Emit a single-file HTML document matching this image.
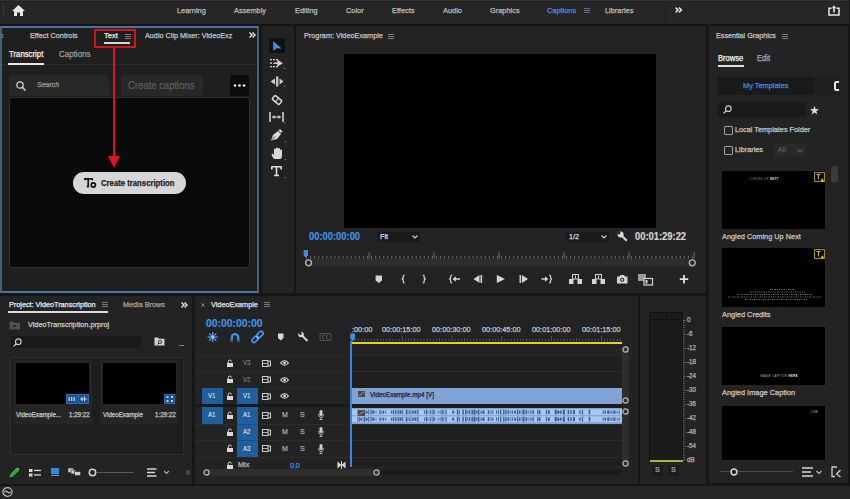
<!DOCTYPE html>
<html><head><meta charset="utf-8">
<style>
*{margin:0;padding:0;box-sizing:border-box}
html,body{width:850px;height:499px;overflow:hidden;background:#161616;font-family:"Liberation Sans",sans-serif}
.a{position:absolute}
.p{position:absolute;background:#232323}
.t{position:absolute;font-size:7.4px;line-height:10px;white-space:nowrap;color:#c4c4c4;-webkit-text-stroke:0.25px currentColor}
.blk{position:absolute;background:#000}
svg{position:absolute;overflow:visible}
.hb{position:absolute;width:5.5px;height:5px;border-top:1px solid #7a7a7a;border-bottom:1px solid #7a7a7a}
.hb:after{content:"";position:absolute;left:0;right:0;top:1px;height:1px;background:#7a7a7a}
</style></head><body>

<!-- TOP BAR -->
<div class="p" style="left:0;top:0;width:850px;height:24px;background:#262626"></div>
<div class="a" style="left:0;top:0;width:850px;height:1px;background:#323232"></div>
<div class="a" style="left:0;top:1px;width:850px;height:1px;background:#222"></div>
<div class="a" style="left:3px;top:3px;width:1px;height:13px;background:#3a3a3a"></div>
<svg style="left:12px;top:5px" width="13" height="11" viewBox="0 0 13 11"><path d="M6.5 0 L13 6 L11 6 L11 11 L8 11 L8 7.5 L5 7.5 L5 11 L2 11 L2 6 L0 6 Z" fill="#e6e6e6"/></svg>
<div class="t" style="transform:scaleX(0.926);transform-origin:0 50%;font-size:7.99px;left:177px;top:6px;color:#bdbdbd">Learning</div>
<div class="t" style="transform:scaleX(0.926);transform-origin:0 50%;font-size:7.99px;left:234px;top:6px;color:#bdbdbd">Assembly</div>
<div class="t" style="transform:scaleX(0.926);transform-origin:0 50%;font-size:7.99px;left:295px;top:6px;color:#bdbdbd">Editing</div>
<div class="t" style="transform:scaleX(0.926);transform-origin:0 50%;font-size:7.99px;left:346px;top:6px;color:#bdbdbd">Color</div>
<div class="t" style="transform:scaleX(0.926);transform-origin:0 50%;font-size:7.99px;left:392px;top:6px;color:#bdbdbd">Effects</div>
<div class="t" style="transform:scaleX(0.926);transform-origin:0 50%;font-size:7.99px;left:443px;top:6px;color:#bdbdbd">Audio</div>
<div class="t" style="transform:scaleX(0.926);transform-origin:0 50%;font-size:7.99px;left:490px;top:6px;color:#bdbdbd">Graphics</div>
<div class="t" style="transform:scaleX(0.926);transform-origin:0 50%;font-size:7.99px;left:547px;top:6px;color:#4d8fd6">Captions</div>
<div class="hb" style="left:584px;top:8px;border-color:#3f75b8"></div>
<div class="t" style="transform:scaleX(0.926);transform-origin:0 50%;font-size:7.99px;left:605px;top:6px;color:#bdbdbd">Libraries</div>
<div class="a" style="left:664.5px;top:2px;width:1px;height:22px;background:#202020"></div>
<svg style="left:675px;top:7px" width="7.5" height="6" viewBox="0 0 7.5 6"><path d="M0.6 0.6 L3 3 L0.6 5.4 M4 0.6 L6.4 3 L4 5.4" stroke="#e8e8e8" stroke-width="1.5" fill="none"/></svg>

<svg style="left:828px;top:4.5px" width="12" height="11" viewBox="0 0 12 11"><path d="M3.5 3.2 H1 V10 H11 V3.2 H8.5" stroke="#e6e6e6" stroke-width="1.5" fill="none"/><path d="M6 7.5 V1.5" stroke="#e6e6e6" stroke-width="1.6"/><path d="M3.8 3.2 L6 0.3 L8.2 3.2 Z" fill="#e6e6e6"/></svg>
<div class="a" style="left:848.5px;top:0;width:1.5px;height:499px;background:#141414"></div>


<!-- LEFT TEXT PANEL -->
<div class="p" style="left:0;top:26px;width:259px;height:267px;border:2px solid #4c73a2;border-left-color:#40607f;border-right-color:#40607f;background:#1f1f1f"></div>
<div class="t" style="transform:scaleX(0.926);transform-origin:0 50%;font-size:7.99px;left:0px;top:31px;color:#777">s</div>
<div class="t" style="transform:scaleX(0.926);transform-origin:0 50%;left:30px;top:31px;font-size:7.88px">Effect Controls</div>
<div class="t" style="transform:scaleX(0.926);transform-origin:0 50%;left:104px;top:31px;font-size:8.1px;color:#f0f0f0">Text</div>
<div class="hb" style="left:125px;top:34px"></div>
<div class="a" style="left:104px;top:42px;width:26px;height:2px;background:#d8d8d8"></div>
<div class="a" style="left:94px;top:29px;width:42px;height:19px;border:2px solid #d4141c"></div>
<div class="t" style="transform:scaleX(0.926);transform-origin:0 50%;left:145px;top:31px;font-size:7.83px">Audio Clip Mixer: VideoExz</div>
<svg style="left:249px;top:32px" width="7" height="6" viewBox="0 0 7 6"><path d="M0.5 0.5 L3 3 L0.5 5.5 M3.5 0.5 L6 3 L3.5 5.5" stroke="#e8e8e8" stroke-width="1.4" fill="none"/></svg>
<div class="t" style="transform:scaleX(0.926);transform-origin:0 50%;left:9px;top:48.5px;font-size:8.42px;color:#f0f0f0">Transcript</div>
<div class="t" style="transform:scaleX(0.926);transform-origin:0 50%;left:59px;top:48.5px;font-size:8.64px;color:#9c9c9c">Captions</div>
<div class="a" style="left:2px;top:64px;width:255px;height:1px;background:#2c2c2c"></div>
<div class="a" style="left:8px;top:63px;width:36px;height:2px;background:#e8e8e8"></div>
<div class="a" style="left:9px;top:75px;width:100px;height:21px;background:#282828;border-radius:2px"></div>
<svg style="left:16px;top:81px" width="11" height="10" viewBox="0 0 11 10"><circle cx="4" cy="4" r="3.2" stroke="#cfcfcf" stroke-width="1.3" fill="none"/><path d="M6.3 6.3 L9.5 9.5" stroke="#cfcfcf" stroke-width="1.5"/></svg>
<div class="t" style="transform:scaleX(0.926);transform-origin:0 50%;left:37px;top:80px;font-size:7.56px;font-style:italic;color:#9a9a9a">Search</div>
<div class="a" style="left:121px;top:75px;width:82px;height:21px;background:#282828;border-radius:2px"></div>
<div class="t" style="transform:scaleX(0.926);transform-origin:0 50%;left:128px;top:80.5px;font-size:10.26px;color:#5c5c5c">Create captions</div>
<div class="a" style="left:230px;top:75px;width:19px;height:21px;background:#0b0b0b;border-radius:2px"></div>
<svg style="left:233px;top:84px" width="13" height="3" viewBox="0 0 13 3"><circle cx="2" cy="1.5" r="1.3" fill="#f0f0f0"/><circle cx="6.5" cy="1.5" r="1.3" fill="#f0f0f0"/><circle cx="11" cy="1.5" r="1.3" fill="#f0f0f0"/></svg>
<div class="a" style="left:9px;top:97px;width:241px;height:171px;background:#0a0a0a;border:1.3px solid #2e2e2e;border-radius:3px"></div>
<div class="a" style="left:113px;top:48px;width:2px;height:110px;background:#e0141c"></div>
<svg style="left:108px;top:156px" width="12" height="12" viewBox="0 0 12 12"><path d="M0 0 L12 0 L6 12 Z" fill="#e0141c"/></svg>
<div class="a" style="left:73px;top:172px;width:113px;height:22px;background:#d6d6d6;border-radius:11px"></div>
<svg style="left:84px;top:177px" width="13" height="12" viewBox="0 0 13 12"><path d="M0.9 3.3 V1.8 H8.2 V3.3 M4.2 1.8 V9.6 H2.8" stroke="#111" stroke-width="1.7" fill="none"/><circle cx="9.3" cy="8" r="2.1" stroke="#111" stroke-width="1.7" fill="none"/></svg>
<div class="t" style="left:101px;top:178px;font-size:9.4px;font-weight:bold;color:#1e1e1e;transform:scaleX(0.825);transform-origin:0 0">Create transcription</div>

<!-- TOOLS -->
<div class="p" style="left:262px;top:26px;width:32px;height:267px"></div>
<div class="a" style="left:269px;top:38px;width:16px;height:15px;background:#111"></div>
<svg style="left:273px;top:41px" width="10" height="11" viewBox="0 0 10 11"><path d="M0 0 L0.5 10 L3.6 7.3 L8.6 7.6 Z" fill="#3b8ff0"/></svg>
<svg style="left:270px;top:58px" width="15" height="14" viewBox="0 0 15 14"><g fill="#d0d0d0"><rect x="0" y="1" width="2" height="1.3"/><rect x="3" y="1" width="2" height="1.3"/><rect x="6" y="1" width="2" height="1.3"/><rect x="0" y="4.5" width="2" height="1.3"/><rect x="0" y="8" width="2" height="1.3"/><rect x="3" y="8" width="2" height="1.3"/><rect x="6" y="8" width="2" height="1.3"/></g><path d="M3.5 5.2 H10 M8 3 L11.5 5.2 L8 7.4 Z" stroke="#d0d0d0" stroke-width="1.5" fill="#d0d0d0"/><path d="M13.5 11 L15 11 L15 9.5 Z" fill="#8a8a8a"/></svg>
<svg style="left:270px;top:76px" width="15" height="14" viewBox="0 0 15 14"><path d="M6.6 0.5 V10.5 M7.8 0.5 V10.5" stroke="#d0d0d0" stroke-width="1.1"/><path d="M0.5 5.5 L5 2.5 L5 8.5 Z M13.5 5.5 L9.5 2.5 L9.5 8.5 Z" fill="#d0d0d0"/><path d="M13.5 11 L15 11 L15 9.5 Z" fill="#8a8a8a"/></svg>
<svg style="left:271px;top:94px" width="13" height="12" viewBox="0 0 13 12"><g transform="rotate(40 6 6)"><rect x="1.5" y="3.5" width="9" height="5" rx="1" stroke="#d8d8d8" stroke-width="1.5" fill="none"/><path d="M6 3.5 V8.5" stroke="#d8d8d8" stroke-width="1"/></g></svg>
<svg style="left:269px;top:111px" width="16" height="14" viewBox="0 0 16 14"><path d="M1 1 V11 M14 1 V11" stroke="#d0d0d0" stroke-width="1.6"/><path d="M3.5 6 H11.5" stroke="#d0d0d0" stroke-width="1.2"/><path d="M3 6 L5.5 4 V8 Z M12 6 L9.5 4 V8 Z" fill="#d0d0d0"/><path d="M14.5 12.5 L16 12.5 L16 11 Z" fill="#8a8a8a"/></svg>
<svg style="left:270px;top:129px" width="16" height="14" viewBox="0 0 16 14"><path d="M1 11.5 L3 6 L8 2 L11 5 L7 10 Z" fill="#d8d8d8"/><path d="M8.5 1.5 L10 0 L12.5 2.5 L11 4 Z" fill="#d8d8d8"/><path d="M2 10.5 L5 7.5" stroke="#232323" stroke-width="0.8"/><path d="M14.5 13 L16 13 L16 11.5 Z" fill="#8a8a8a"/></svg>
<svg style="left:271px;top:147px" width="15" height="14" viewBox="0 0 15 14"><path d="M3 12 Q0.5 9 0.5 7 L1.5 6.5 L3 8 V2.5 Q3 1.5 4 1.5 Q5 1.5 5 2.5 V6 V1.5 Q5 0.5 6 0.5 Q7 0.5 7 1.5 V6 V2 Q7 1 8 1 Q9 1 9 2 V6.5 V3.5 Q9 2.5 10 2.5 Q11 2.5 11 3.5 V8.5 Q11 11 9.5 12 Z" fill="#d8d8d8"/><path d="M13.5 13 L15 13 L15 11.5 Z" fill="#8a8a8a"/></svg>
<svg style="left:271px;top:166px" width="15" height="13" viewBox="0 0 15 13"><path d="M0.5 0.8 H10.5 M0.8 0.5 V3.5 M10.2 0.5 V3.5 M5.5 0.8 V9.5 M3 9.5 H8" stroke="#e0e0e0" stroke-width="1.6" fill="none"/><path d="M13.5 12 L15 12 L15 10.5 Z" fill="#8a8a8a"/></svg>

<!-- PROGRAM MONITOR -->
<div class="p" style="left:296px;top:26px;width:410px;height:267px"></div>
<div class="t" style="transform:scaleX(0.926);transform-origin:0 50%;left:304px;top:31px;font-size:7.88px">Program: VideoExample</div>
<div class="hb" style="left:388px;top:34px"></div>
<div class="blk" style="left:344px;top:53.5px;width:312px;height:174.5px"></div>
<div class="t" style="transform:scaleX(0.926);transform-origin:0 50%;left:308.6px;top:230.8px;font-size:10.15px;line-height:11px;font-weight:bold;color:#3f92e6;-webkit-text-stroke:0.2px currentColor">00:00:00:00</div>
<div class="a" style="left:376.5px;top:231.5px;width:43.5px;height:10px;background:#1a1a1a"></div>
<div class="t" style="transform:scaleX(0.926);transform-origin:0 50%;left:380px;top:231.5px;font-size:7.88px;color:#dcdcdc">Fit</div>
<svg style="left:412px;top:234.5px" width="6" height="4" viewBox="0 0 6 4"><path d="M0.5 0.5 L3 3 L5.5 0.5" stroke="#cfcfcf" stroke-width="1.1" fill="none"/></svg>
<div class="a" style="left:565.5px;top:231.5px;width:43.5px;height:10px;background:#1a1a1a"></div>
<div class="t" style="transform:scaleX(0.926);transform-origin:0 50%;left:569px;top:231.5px;font-size:7.88px;color:#dcdcdc">1/2</div>
<svg style="left:600.5px;top:234.5px" width="6" height="4" viewBox="0 0 6 4"><path d="M0.5 0.5 L3 3 L5.5 0.5" stroke="#cfcfcf" stroke-width="1.1" fill="none"/></svg>
<svg style="left:617px;top:231px" width="11" height="11" viewBox="0 0 11 11"><path d="M9.8 9.8 L4.5 4.5" stroke="#d8d8d8" stroke-width="2"/><path d="M1 3.5 A3 3 0 0 1 5.5 0.8 L3.7 2.6 L4.5 4.5 L6.4 5.3 L8.2 3.5 A3 3 0 0 1 5.5 8 Z" fill="none"/><circle cx="3.6" cy="3.6" r="3" fill="#d8d8d8"/><path d="M2.2 0.3 L3.8 1.9 L1.9 3.8 L0.3 2.2 Z" fill="#232323"/></svg>
<div class="t" style="transform:scaleX(0.926);transform-origin:0 50%;left:634.7px;top:231.3px;font-size:10.15px;line-height:11px;font-weight:bold;color:#d2d2d2;-webkit-text-stroke:0.2px currentColor">00:01:29:22</div>
<svg style="left:300px;top:244px" width="400" height="26" viewBox="0 0 400 26"><rect x="5" y="14.6" width="388" height="7.8" fill="#2e2e2e"/><g fill="#6a6a6a"><rect x="6.0" y="11.800000000000011" width="1" height="2.8"/><rect x="10.1" y="11.800000000000011" width="1" height="2.8"/><rect x="14.1" y="11.800000000000011" width="1" height="2.8"/><rect x="18.2" y="11.800000000000011" width="1" height="2.8"/><rect x="22.2" y="11.800000000000011" width="1" height="2.8"/><rect x="26.3" y="11.800000000000011" width="1" height="2.8"/><rect x="30.4" y="11.800000000000011" width="1" height="2.8"/><rect x="34.4" y="11.800000000000011" width="1" height="2.8"/><rect x="38.5" y="11.800000000000011" width="1" height="2.8"/><rect x="42.6" y="11.800000000000011" width="1" height="2.8"/><rect x="46.6" y="11.800000000000011" width="1" height="2.8"/><rect x="50.7" y="11.800000000000011" width="1" height="2.8"/><rect x="54.8" y="11.800000000000011" width="1" height="2.8"/><rect x="58.8" y="11.800000000000011" width="1" height="2.8"/><rect x="62.9" y="11.800000000000011" width="1" height="2.8"/><rect x="66.9" y="11.800000000000011" width="1" height="2.8"/><rect x="71.0" y="11.800000000000011" width="1" height="2.8"/><rect x="75.1" y="11.800000000000011" width="1" height="2.8"/><rect x="79.1" y="11.800000000000011" width="1" height="2.8"/><rect x="83.2" y="11.800000000000011" width="1" height="2.8"/><rect x="87.2" y="11.800000000000011" width="1" height="2.8"/><rect x="91.3" y="11.800000000000011" width="1" height="2.8"/><rect x="95.4" y="11.800000000000011" width="1" height="2.8"/><rect x="99.4" y="11.800000000000011" width="1" height="2.8"/><rect x="103.5" y="11.800000000000011" width="1" height="2.8"/><rect x="107.6" y="11.800000000000011" width="1" height="2.8"/><rect x="111.6" y="11.800000000000011" width="1" height="2.8"/><rect x="115.7" y="11.800000000000011" width="1" height="2.8"/><rect x="119.8" y="11.800000000000011" width="1" height="2.8"/><rect x="123.8" y="11.800000000000011" width="1" height="2.8"/><rect x="127.9" y="11.800000000000011" width="1" height="2.8"/><rect x="131.9" y="11.800000000000011" width="1" height="2.8"/><rect x="136.0" y="11.800000000000011" width="1" height="2.8"/><rect x="140.1" y="11.800000000000011" width="1" height="2.8"/><rect x="144.1" y="11.800000000000011" width="1" height="2.8"/><rect x="148.2" y="11.800000000000011" width="1" height="2.8"/><rect x="152.2" y="11.800000000000011" width="1" height="2.8"/><rect x="156.3" y="11.800000000000011" width="1" height="2.8"/><rect x="160.4" y="11.800000000000011" width="1" height="2.8"/><rect x="164.4" y="11.800000000000011" width="1" height="2.8"/><rect x="168.5" y="11.800000000000011" width="1" height="2.8"/><rect x="172.6" y="11.800000000000011" width="1" height="2.8"/><rect x="176.6" y="11.800000000000011" width="1" height="2.8"/><rect x="180.7" y="11.800000000000011" width="1" height="2.8"/><rect x="184.8" y="11.800000000000011" width="1" height="2.8"/><rect x="188.8" y="11.800000000000011" width="1" height="2.8"/><rect x="192.9" y="11.800000000000011" width="1" height="2.8"/><rect x="196.9" y="11.800000000000011" width="1" height="2.8"/><rect x="201.0" y="11.800000000000011" width="1" height="2.8"/><rect x="205.1" y="11.800000000000011" width="1" height="2.8"/><rect x="209.1" y="11.800000000000011" width="1" height="2.8"/><rect x="213.2" y="11.800000000000011" width="1" height="2.8"/><rect x="217.2" y="11.800000000000011" width="1" height="2.8"/><rect x="221.3" y="11.800000000000011" width="1" height="2.8"/><rect x="225.4" y="11.800000000000011" width="1" height="2.8"/><rect x="229.4" y="11.800000000000011" width="1" height="2.8"/><rect x="233.5" y="11.800000000000011" width="1" height="2.8"/><rect x="237.6" y="11.800000000000011" width="1" height="2.8"/><rect x="241.6" y="11.800000000000011" width="1" height="2.8"/><rect x="245.7" y="11.800000000000011" width="1" height="2.8"/><rect x="249.8" y="11.800000000000011" width="1" height="2.8"/><rect x="253.8" y="11.800000000000011" width="1" height="2.8"/><rect x="257.9" y="11.800000000000011" width="1" height="2.8"/><rect x="261.9" y="11.800000000000011" width="1" height="2.8"/><rect x="266.0" y="11.800000000000011" width="1" height="2.8"/><rect x="270.1" y="11.800000000000011" width="1" height="2.8"/><rect x="274.1" y="11.800000000000011" width="1" height="2.8"/><rect x="278.2" y="11.800000000000011" width="1" height="2.8"/><rect x="282.2" y="11.800000000000011" width="1" height="2.8"/><rect x="286.3" y="11.800000000000011" width="1" height="2.8"/><rect x="290.4" y="11.800000000000011" width="1" height="2.8"/><rect x="294.4" y="11.800000000000011" width="1" height="2.8"/><rect x="298.5" y="11.800000000000011" width="1" height="2.8"/><rect x="302.6" y="11.800000000000011" width="1" height="2.8"/><rect x="306.6" y="11.800000000000011" width="1" height="2.8"/><rect x="310.7" y="11.800000000000011" width="1" height="2.8"/><rect x="314.8" y="11.800000000000011" width="1" height="2.8"/><rect x="318.8" y="11.800000000000011" width="1" height="2.8"/><rect x="322.9" y="11.800000000000011" width="1" height="2.8"/><rect x="326.9" y="11.800000000000011" width="1" height="2.8"/><rect x="331.0" y="11.800000000000011" width="1" height="2.8"/><rect x="335.1" y="11.800000000000011" width="1" height="2.8"/><rect x="339.1" y="11.800000000000011" width="1" height="2.8"/><rect x="343.2" y="11.800000000000011" width="1" height="2.8"/><rect x="347.2" y="11.800000000000011" width="1" height="2.8"/><rect x="351.3" y="11.800000000000011" width="1" height="2.8"/><rect x="355.4" y="11.800000000000011" width="1" height="2.8"/><rect x="359.4" y="11.800000000000011" width="1" height="2.8"/><rect x="363.5" y="11.800000000000011" width="1" height="2.8"/><rect x="367.6" y="11.800000000000011" width="1" height="2.8"/><rect x="371.6" y="11.800000000000011" width="1" height="2.8"/><rect x="375.7" y="11.800000000000011" width="1" height="2.8"/><rect x="379.8" y="11.800000000000011" width="1" height="2.8"/><rect x="383.8" y="11.800000000000011" width="1" height="2.8"/><rect x="387.9" y="11.800000000000011" width="1" height="2.8"/><rect x="391.9" y="11.800000000000011" width="1" height="2.8"/><rect x="68.6" y="7.800000000000011" width="1" height="6.8"/><rect x="133.6" y="7.800000000000011" width="1" height="6.8"/><rect x="198.6" y="7.800000000000011" width="1" height="6.8"/><rect x="263.6" y="7.800000000000011" width="1" height="6.8"/><rect x="328.6" y="7.800000000000011" width="1" height="6.8"/><rect x="393.6" y="7.800000000000011" width="1" height="6.8"/></g><path d="M3.6 6 H8 V11.5 L5.8 13.5 L3.6 11.5 Z" fill="#3d8fe3"/><circle cx="8.5" cy="18.8" r="2.9" stroke="#b4b4b4" stroke-width="1.4" fill="#232323"/><circle cx="392.3" cy="18.8" r="2.9" stroke="#b4b4b4" stroke-width="1.4" fill="#232323"/></svg>
<!-- controls -->
<svg style="left:370px;top:272px" width="330" height="14" viewBox="370 272 330 14" fill="#d4d4d4">
<path d="M375.6 275.5 H382 V280.5 L378.8 283 L375.6 280.5 Z"/>
<path d="M404.8 275 Q403.2 275 403.2 276.6 V278 L402.2 279 L403.2 280 V281.4 Q403.2 283 404.8 283" stroke="#d4d4d4" stroke-width="1.2" fill="none"/>
<path d="M422.6 275 Q424.20000000000005 275 424.20000000000005 276.6 V278 L425.20000000000005 279 L424.20000000000005 280 V281.4 Q424.20000000000005 283 422.6 283" stroke="#d4d4d4" stroke-width="1.2" fill="none"/>
<path d="M452.2 275 Q450.59999999999997 275 450.59999999999997 276.6 V278 L449.59999999999997 279 L450.59999999999997 280 V281.4 Q450.59999999999997 283 452.2 283" stroke="#d4d4d4" stroke-width="1.2" fill="none"/>
<path d="M452.5 279 L455.8 276.2 V278.2 H460 V279.8 H455.8 V281.8 Z"/>
<path d="M473.5 279 L479.5 275 V283 Z"/><rect x="480.5" y="275" width="1.6" height="8"/>
<path d="M496.8 275 L505 279 L496.8 283 Z"/>
<rect x="519.5" y="275" width="1.6" height="8"/><path d="M522 275 L528 279 L522 283 Z"/>
<path d="M541.5 278.2 H545 V276.2 L548.3 279 L545 281.8 V279.8 H541.5 Z"/>
<path d="M549 275 Q550.6 275 550.6 276.6 V278 L551.6 279 L550.6 280 V281.4 Q550.6 283 549 283" stroke="#d4d4d4" stroke-width="1.2" fill="none"/>
<rect x="572.5" y="274.5" width="6" height="4.5" stroke="#d4d4d4" stroke-width="1" fill="none"/><rect x="569" y="279" width="4.5" height="5"/><rect x="577.5" y="279" width="4.5" height="5"/><path d="M575.5 275.5 V278.5" stroke="#d4d4d4" stroke-width="1"/>
<rect x="595.5" y="274.5" width="6" height="4.5" stroke="#d4d4d4" stroke-width="1" fill="none"/><rect x="592" y="279" width="4.5" height="5"/><rect x="600.5" y="279" width="4.5" height="5"/><path d="M598.5 275.5 V278.5" stroke="#d4d4d4" stroke-width="1"/>
<path d="M617 276.5 H619.5 L620.5 275 H624 L625 276.5 H627.5 V283.5 H617 Z"/><circle cx="622.2" cy="279.8" r="2.1" fill="#232323"/><circle cx="622.2" cy="279.8" r="1.1"/>
<rect x="638" y="274" width="8" height="7" fill="#9a9a9a"/><rect x="644" y="278.5" width="8.5" height="6.5" stroke="#d4d4d4" stroke-width="1.2" fill="#232323"/><rect x="645.5" y="280" width="2" height="3.5"/>
<path d="M684 275 V283.5 M679.8 279.2 H688.2" stroke="#e0e0e0" stroke-width="1.8"/>
</svg>

<!-- ESSENTIAL GRAPHICS -->
<div class="p" style="left:709px;top:26px;width:139px;height:457px"></div>
<div class="t" style="transform:scaleX(0.926);transform-origin:0 50%;left:716px;top:30.5px;font-size:7.78px">Essential Graphics</div>
<div class="hb" style="left:782px;top:33.5px"></div>
<div class="t" style="transform:scaleX(0.926);transform-origin:0 50%;left:718px;top:53.5px;font-size:8.21px;color:#f0f0f0">Browse</div>
<div class="t" style="transform:scaleX(0.926);transform-origin:0 50%;left:756.5px;top:53.5px;font-size:8.21px;color:#a8a8a8">Edit</div>
<div class="a" style="left:718px;top:65px;width:26px;height:1.6px;background:#e0e0e0"></div>
<div class="a" style="left:717.5px;top:77px;width:96.5px;height:18px;background:#1a1a1a"></div>
<div class="a" style="left:815px;top:77px;width:24px;height:18px;background:#1f1f1f"></div>
<div class="t" style="transform:scaleX(0.926);transform-origin:0 50%;left:743px;top:81px;font-size:7.99px;color:#3d8fe3">My Templates</div>
<div class="a" style="left:834px;top:81px;width:5px;height:10px;background:#e8e8e8;border-radius:2.5px 0 0 2.5px"></div>
<div class="a" style="left:836px;top:83px;width:3px;height:6px;background:#1f1f1f"></div>
<div class="a" style="left:717.5px;top:102px;width:88px;height:15px;background:#1a1a1a"></div>
<svg style="left:722.5px;top:105px" width="9" height="9" viewBox="0 0 9 9"><circle cx="5.3" cy="3.7" r="2.8" stroke="#d0d0d0" stroke-width="1.1" fill="none"/><path d="M3.3 5.7 L0.6 8.4" stroke="#d0d0d0" stroke-width="1.3"/></svg>
<svg style="left:809.5px;top:105.5px" width="9" height="9" viewBox="0 0 9 9"><path d="M4.5 0 L5.6 3.1 L9 3.3 L6.3 5.3 L7.3 8.6 L4.5 6.6 L1.7 8.6 L2.7 5.3 L0 3.3 L3.4 3.1 Z" fill="#e0e0e0"/></svg>
<div class="a" style="left:723.5px;top:126px;width:9px;height:9px;border:1.2px solid #a0a0a0;border-radius:1px"></div>
<div class="t" style="transform:scaleX(0.926);transform-origin:0 50%;left:735px;top:125.3px;font-size:7.88px;color:#c8c8c8">Local Templates Folder</div>
<div class="a" style="left:723.5px;top:145.5px;width:9px;height:9px;border:1.2px solid #a0a0a0;border-radius:1px"></div>
<div class="t" style="transform:scaleX(0.926);transform-origin:0 50%;left:735px;top:145px;font-size:7.88px;color:#c8c8c8">Libraries</div>
<div class="a" style="left:773.5px;top:144px;width:32px;height:13px;background:#292929"></div>
<div class="t" style="transform:scaleX(0.926);transform-origin:0 50%;left:778px;top:145px;font-size:7.88px;color:#5a5a5a">All</div>
<svg style="left:797px;top:148.5px" width="6" height="4" viewBox="0 0 6 4"><path d="M0.5 0.5 L3 3 L5.5 0.5" stroke="#5a5a5a" stroke-width="1.1" fill="none"/></svg>
<div class="a" style="left:831px;top:166px;width:7px;height:17px;background:#3a3a3a;border-radius:3.5px"></div>
<div class="blk" style="left:722px;top:170.5px;width:103px;height:58px"><svg style="left:92px;top:1px" width="11" height="10" viewBox="0 0 11 10"><rect x="0.6" y="0.6" width="9.8" height="8.8" stroke="#b89a2a" stroke-width="1" fill="#000"/><path d="M2.5 2.5 H6.5 M4.5 2.5 V7.5" stroke="#c9b060" stroke-width="1.1"/><path d="M6.3 9.4 L8.3 6 L10.3 9.4 Z" fill="#d8b832"/></svg><div class="t" style="left:27px;top:3px;font-size:2.8px;color:#888;letter-spacing:0.4px;-webkit-text-stroke:0">COMING UP <b style="color:#ddd">NEXT</b></div></div>
<div class="t" style="transform:scaleX(0.926);transform-origin:0 50%;left:722px;top:231.5px;font-size:7.94px;color:#c8c8c8">Angled Coming Up Next</div>
<div class="blk" style="left:722px;top:248px;width:103px;height:58.5px"><svg style="left:92px;top:1px" width="11" height="10" viewBox="0 0 11 10"><rect x="0.6" y="0.6" width="9.8" height="8.8" stroke="#b89a2a" stroke-width="1" fill="#000"/><path d="M2.5 2.5 H6.5 M4.5 2.5 V7.5" stroke="#c9b060" stroke-width="1.1"/><path d="M6.3 9.4 L8.3 6 L10.3 9.4 Z" fill="#d8b832"/></svg><svg style="left:3px;top:40px" width="100" height="14" viewBox="0 0 100 14"><g stroke="#707070" stroke-width="1" stroke-dasharray="1.5 1 0.8 1.2"><path d="M45 1.5 H70"/><path d="M25 4 H80"/><path d="M12 6.5 H88"/><path d="M3 9 H97"/><path d="M20 11.5 H82"/></g></svg></div>
<div class="t" style="transform:scaleX(0.926);transform-origin:0 50%;left:722px;top:310px;font-size:7.99px;color:#c8c8c8">Angled Credits</div>
<div class="blk" style="left:722px;top:327px;width:103px;height:58px"><div class="t" style="left:38px;top:44px;font-size:2.8px;color:#bbb;letter-spacing:0.4px;-webkit-text-stroke:0">IMAGE CAPTION <b style="color:#eee">HERE</b></div></div>
<div class="t" style="transform:scaleX(0.926);transform-origin:0 50%;left:722px;top:388px;font-size:7.99px;color:#c8c8c8">Angled Image Caption</div>
<div class="blk" style="left:722px;top:405.5px;width:103px;height:54px"><div class="t" style="left:89px;top:1px;font-size:3.2px;color:#bbb;-webkit-text-stroke:0">LIVE</div></div>
<div class="a" style="left:720px;top:470.5px;width:73px;height:1.5px;background:#4a4a4a"></div>
<svg style="left:729.5px;top:467.5px" width="8" height="8" viewBox="0 0 8 8"><circle cx="4" cy="4" r="2.9" stroke="#d0d0d0" stroke-width="1.5" fill="#232323"/><circle cx="4" cy="4" r="0.9" fill="#111"/></svg>
<svg style="left:801.5px;top:467px" width="22" height="11" viewBox="0 0 22 11"><path d="M0 1 H11 M0 5 H9 M0 9 H11" stroke="#d8d8d8" stroke-width="1.5"/><path d="M14.5 4 L17 6.5 L19.5 4" stroke="#c0c0c0" stroke-width="1.1" fill="none"/></svg>
<svg style="left:831px;top:466px" width="10" height="12" viewBox="0 0 10 12"><path d="M6 1 H1 V10.5 H4" stroke="#d0d0d0" stroke-width="1.3" fill="none"/><path d="M9.5 4 L5.5 8 L9.5 11" stroke="#d0d0d0" stroke-width="1.3" fill="none"/></svg>

<!-- PROJECT -->
<div class="p" style="left:0;top:296px;width:192px;height:187.5px"></div>
<div class="t" style="transform:scaleX(0.926);transform-origin:0 50%;left:9px;top:299.6px;font-size:7.83px;color:#ececec">Project: VideoTranscription</div>
<div class="hb" style="left:102px;top:302px"></div>
<div class="a" style="left:8px;top:311px;width:100px;height:1.6px;background:#dcdcdc"></div>
<div class="t" style="transform:scaleX(0.926);transform-origin:0 50%;left:123px;top:299.6px;font-size:7.83px;color:#a4a4a4">Media Brows</div>
<svg style="left:181px;top:302px" width="7" height="6" viewBox="0 0 7 6"><path d="M0.5 0.5 L3 3 L0.5 5.5 M3.5 0.5 L6 3 L3.5 5.5" stroke="#e8e8e8" stroke-width="1.4" fill="none"/></svg>
<svg style="left:9px;top:321px" width="12" height="9" viewBox="0 0 12 9"><path d="M0.5 0.5 H4.5 L5.5 1.8 H11 V8.5 H0.5 Z" fill="#505050"/><rect x="4" y="4" width="3" height="2" fill="#2a2a2a"/></svg>
<div class="t" style="transform:scaleX(0.926);transform-origin:0 50%;left:28px;top:320.3px;font-size:7.88px;color:#cfcfcf">VideoTranscription.prproj</div>
<div class="a" style="left:10.5px;top:336px;width:130.5px;height:11.5px;background:#1a1a1a"></div>
<svg style="left:13px;top:337.5px" width="9" height="9" viewBox="0 0 9 9"><circle cx="5.3" cy="3.7" r="2.8" stroke="#d0d0d0" stroke-width="1.1" fill="none"/><path d="M3.3 5.7 L0.6 8.4" stroke="#d0d0d0" stroke-width="1.3"/></svg>
<svg style="left:154px;top:337px" width="11" height="9" viewBox="0 0 11 9"><path d="M0.5 0.5 H4 L5 1.8 H10.5 V8.5 H0.5 Z" fill="#d0d0d0"/><circle cx="6" cy="5" r="1.6" stroke="#2a2a2a" stroke-width="0.9" fill="none"/><path d="M5 6 L3.5 7.5" stroke="#2a2a2a" stroke-width="0.9"/></svg>
<div class="a" style="left:179px;top:345px;width:4.5px;height:1px;background:#888"></div>
<div class="a" style="left:9.5px;top:357px;width:174px;height:97.5px;border:1px solid #2e2e2e;background:#1e1e1e"></div>
<div class="a" style="left:14px;top:360px;width:78px;height:64px;background:#252525"></div>
<div class="a" style="left:100px;top:360px;width:78px;height:64px;background:#252525"></div>
<div class="blk" style="left:16px;top:363px;width:73px;height:40.5px"></div>
<div class="blk" style="left:102.5px;top:363px;width:73px;height:40.5px"></div>
<svg style="left:65.5px;top:394px" width="24" height="10" viewBox="0 0 24 10"><rect x="0.5" y="0.5" width="10.5" height="9" fill="#1d4f8f" stroke="#3b7fd0" stroke-width="0.8"/><rect x="12" y="0.5" width="10.5" height="9" fill="#1d4f8f" stroke="#3b7fd0" stroke-width="0.8"/><g fill="#bcd4f0"><rect x="2.5" y="3" width="1.3" height="4"/><rect x="5" y="3" width="1.3" height="4"/><rect x="7.5" y="3" width="1.3" height="4"/><rect x="14" y="4.5" width="7" height="1"/><rect x="15.5" y="3" width="1" height="4"/><rect x="18" y="2.5" width="1" height="5"/></g></svg>
<svg style="left:164px;top:394px" width="11.5" height="10" viewBox="0 0 11.5 10"><rect x="0.5" y="0.5" width="10.5" height="9" fill="#1d4f8f" stroke="#3b7fd0" stroke-width="0.8"/><g fill="#bcd4f0"><rect x="2.5" y="2" width="2" height="2"/><rect x="7" y="2" width="2" height="2"/><rect x="2.5" y="6" width="2" height="2"/><rect x="7" y="6" width="2" height="2"/></g></svg>
<div class="t" style="transform:scaleX(0.926);transform-origin:0 50%;left:16px;top:410.4px;font-size:6.7px;color:#c8c8c8">VideoExample...</div>
<div class="t" style="transform:scaleX(0.926);transform-origin:0 50%;left:68.5px;top:410.4px;font-size:6.7px;color:#c8c8c8">1:29:22</div>
<div class="t" style="transform:scaleX(0.926);transform-origin:0 50%;left:102.5px;top:410.4px;font-size:6.7px;color:#c8c8c8">VideoExample</div>
<div class="t" style="transform:scaleX(0.926);transform-origin:0 50%;left:155.3px;top:410.4px;font-size:6.7px;color:#c8c8c8">1:29:22</div>
<svg style="left:9px;top:466.5px" width="11" height="11" viewBox="0 0 11 11"><path d="M0.5 10.5 L1.5 7 L7.5 1 Q8.5 0 9.5 1 L10 1.5 Q11 2.5 10 3.5 L4 9.5 Z" fill="#3cb544"/><path d="M2 9 L8 3" stroke="#1e6e22" stroke-width="0.7"/></svg>
<svg style="left:28.5px;top:468.5px" width="12" height="8" viewBox="0 0 12 8"><g fill="#d8d8d8"><rect x="0" y="0" width="3.5" height="3"/><rect x="0" y="4.5" width="3.5" height="3"/><rect x="5" y="0.8" width="7" height="1.3"/><rect x="5" y="5.3" width="7" height="1.3"/></g></svg>
<svg style="left:50.5px;top:468px" width="8" height="8" viewBox="0 0 8 8"><rect x="0" y="0" width="8" height="6" fill="#2e8ae6"/><rect x="0" y="7" width="8" height="1" fill="#5a9ee0"/></svg>
<svg style="left:68px;top:468px" width="13" height="8" viewBox="0 0 13 8"><rect x="0.3" y="0.3" width="5" height="4" fill="#d0d0d0"/><rect x="3" y="2" width="5" height="4" fill="#d0d0d0" stroke="#232323" stroke-width="0.6"/><rect x="6.5" y="3.5" width="6.2" height="4.2" fill="#d0d0d0" stroke="#232323" stroke-width="0.6"/></svg>
<svg style="left:88px;top:467.5px" width="9" height="9" viewBox="0 0 9 9"><circle cx="4.5" cy="4.5" r="3.2" stroke="#d0d0d0" stroke-width="1.6" fill="#232323"/></svg>
<div class="a" style="left:97px;top:471.5px;width:37px;height:1px;background:#5a5a5a"></div>
<svg style="left:147px;top:468px" width="23" height="9" viewBox="0 0 23 9"><path d="M0 1 H9.5 M0 4.5 H8 M0 8 H9.5" stroke="#d8d8d8" stroke-width="1.4"/><path d="M17.2 3.2 L19.5 5.5 L21.8 3.2" stroke="#c0c0c0" stroke-width="1.1" fill="none"/></svg>
<div class="a" style="left:186px;top:469.5px;width:3.5px;height:5.5px;background:#444"></div>
<!-- TIMELINE -->
<div class="p" style="left:195px;top:296px;width:443px;height:187.5px"></div>
<div class="a" style="left:351px;top:355px;width:271px;height:111px;background:#1f1f1f"></div>
<svg style="left:200.5px;top:302.5px" width="4" height="4" viewBox="0 0 4 4"><path d="M0.3 0.3 L3.7 3.7 M3.7 0.3 L0.3 3.7" stroke="#8a8a8a" stroke-width="0.9"/></svg>
<div class="t" style="transform:scaleX(0.926);transform-origin:0 50%;left:211px;top:299.6px;font-size:7.88px;color:#e4e4e4">VideoExample</div>
<div class="hb" style="left:264px;top:302px"></div>
<div class="t" style="transform:scaleX(0.926);transform-origin:0 50%;left:205.5px;top:317.3px;font-size:11.23px;line-height:12px;font-weight:bold;color:#3f92e6;-webkit-text-stroke:0.2px currentColor">00:00:00:00</div>
<svg style="left:206px;top:331px" width="130" height="12" viewBox="206 331 130 12">
<g stroke="#4a8ed6" stroke-width="1.5" stroke-linecap="round"><path d="M212.7 332.5 V341.5 M208.2 337 H217.2 M209.5 333.8 L215.9 340.2 M215.9 333.8 L209.5 340.2"/></g>
<circle cx="212.7" cy="337" r="1.5" fill="#9cc4ee"/>
<path d="M231.8 342 V337.3 A3.2 3.2 0 0 1 238.2 337.3 V342" stroke="#3d8fe3" stroke-width="2.4" fill="none"/>
<path d="M231.8 342 V340.3 M238.2 342 V340.3" stroke="#1e4f86" stroke-width="2.4"/>
<g stroke="#3f93ea" stroke-width="1.7" fill="none"><rect x="251.5" y="337.2" width="7.5" height="4" rx="2" transform="rotate(-45 255.2 339.2)"/><rect x="256.2" y="332.6" width="7.5" height="4" rx="2" transform="rotate(-45 259.9 334.6)"/></g><path d="M256 336.2 L258.6 338.8" stroke="#8cc0f5" stroke-width="1.3"/>
<path d="M278 333.5 H283.5 V338 L280.75 340.5 L278 338 Z" fill="#d8d8d8"/>
<path d="M307.5 341 L302.5 336" stroke="#d8d8d8" stroke-width="2"/><circle cx="301" cy="334.5" r="2.8" fill="#d8d8d8"/><path d="M300 331.2 L302.2 333.4 L300.4 335.2 L298.2 333 Z" fill="#232323"/>
<rect x="320" y="333.5" width="11" height="7" rx="1.5" stroke="#575757" stroke-width="1" fill="none"/><path d="M324.5 335.5 H322.5 V338.5 H324.5 M328.5 335.5 H326.5 V338.5 H328.5" stroke="#575757" stroke-width="0.9" fill="none"/>
</svg>
<div class="a" style="left:195px;top:354.5px;width:427px;height:1px;background:#2c2c2c"></div>
<div class="a" style="left:195px;top:371px;width:427px;height:1px;background:#2c2c2c"></div>
<div class="a" style="left:195px;top:387.5px;width:427px;height:1px;background:#2c2c2c"></div>
<div class="a" style="left:195px;top:423.5px;width:427px;height:1px;background:#2c2c2c"></div>
<div class="a" style="left:195px;top:440px;width:427px;height:1px;background:#2c2c2c"></div>
<div class="a" style="left:195px;top:456.5px;width:427px;height:1px;background:#2c2c2c"></div>
<div class="a" style="left:195px;top:404px;width:427px;height:3px;background:#1a1a1a"></div>
<div class="a" style="left:202px;top:388px;width:21px;height:16px;background:#1f5f9c"></div>
<div class="a" style="left:237px;top:388px;width:21px;height:16px;background:#1f5f9c"></div>
<div class="a" style="left:202px;top:407px;width:21px;height:16.5px;background:#1f5f9c"></div>
<div class="a" style="left:237px;top:407px;width:21px;height:49.5px;background:#1f5f9c"></div>
<div class="a" style="left:237px;top:423.5px;width:21px;height:1px;background:#1a4e80"></div>
<div class="a" style="left:237px;top:440px;width:21px;height:1px;background:#1a4e80"></div>
<svg style="left:227px;top:359.5px" width="6" height="7" viewBox="0 0 6 7"><rect x="0" y="3" width="6" height="4" fill="#d8d8d8"/><path d="M1.2 3 V1.8 A1.6 1.6 0 0 1 4.4 1.6" stroke="#d8d8d8" stroke-width="1" fill="none"/></svg>
<div class="t" style="transform:scaleX(0.926);transform-origin:0 50%;left:242.5px;top:358px;font-size:6.59px;color:#8a8a8a;-webkit-text-stroke:0.1px currentColor">V3</div>
<svg style="left:262px;top:359.5px" width="9" height="7" viewBox="0 0 9 7"><rect x="0.5" y="0.5" width="5.5" height="6" stroke="#cfcfcf" stroke-width="1" fill="none"/><path d="M6 1.5 L8.5 0.8 V6.2 L6 5.5" stroke="#cfcfcf" stroke-width="1" fill="none"/><path d="M0.5 3.5 H6" stroke="#cfcfcf" stroke-width="0.8"/></svg>
<svg style="left:280px;top:360px" width="9" height="6" viewBox="0 0 9 6"><path d="M0.5 3 Q4.5 -1.5 8.5 3 Q4.5 7.5 0.5 3 Z" stroke="#e0e0e0" stroke-width="1.1" fill="none"/><circle cx="4.5" cy="3" r="1.3" fill="#e0e0e0"/></svg>
<svg style="left:227px;top:376.0px" width="6" height="7" viewBox="0 0 6 7"><rect x="0" y="3" width="6" height="4" fill="#d8d8d8"/><path d="M1.2 3 V1.8 A1.6 1.6 0 0 1 4.4 1.6" stroke="#d8d8d8" stroke-width="1" fill="none"/></svg>
<div class="t" style="transform:scaleX(0.926);transform-origin:0 50%;left:242.5px;top:374.5px;font-size:6.59px;color:#8a8a8a;-webkit-text-stroke:0.1px currentColor">V2</div>
<svg style="left:262px;top:376.0px" width="9" height="7" viewBox="0 0 9 7"><rect x="0.5" y="0.5" width="5.5" height="6" stroke="#cfcfcf" stroke-width="1" fill="none"/><path d="M6 1.5 L8.5 0.8 V6.2 L6 5.5" stroke="#cfcfcf" stroke-width="1" fill="none"/><path d="M0.5 3.5 H6" stroke="#cfcfcf" stroke-width="0.8"/></svg>
<svg style="left:280px;top:376.5px" width="9" height="6" viewBox="0 0 9 6"><path d="M0.5 3 Q4.5 -1.5 8.5 3 Q4.5 7.5 0.5 3 Z" stroke="#e0e0e0" stroke-width="1.1" fill="none"/><circle cx="4.5" cy="3" r="1.3" fill="#e0e0e0"/></svg>
<svg style="left:227px;top:392.5px" width="6" height="7" viewBox="0 0 6 7"><rect x="0" y="3" width="6" height="4" fill="#d8d8d8"/><path d="M1.2 3 V1.8 A1.6 1.6 0 0 1 4.4 1.6" stroke="#d8d8d8" stroke-width="1" fill="none"/></svg>
<div class="t" style="transform:scaleX(0.926);transform-origin:0 50%;left:242.5px;top:391px;font-size:6.59px;color:#e0e0e0;-webkit-text-stroke:0.1px currentColor">V1</div>
<svg style="left:262px;top:392.5px" width="9" height="7" viewBox="0 0 9 7"><rect x="0.5" y="0.5" width="5.5" height="6" stroke="#cfcfcf" stroke-width="1" fill="none"/><path d="M6 1.5 L8.5 0.8 V6.2 L6 5.5" stroke="#cfcfcf" stroke-width="1" fill="none"/><path d="M0.5 3.5 H6" stroke="#cfcfcf" stroke-width="0.8"/></svg>
<svg style="left:280px;top:393px" width="9" height="6" viewBox="0 0 9 6"><path d="M0.5 3 Q4.5 -1.5 8.5 3 Q4.5 7.5 0.5 3 Z" stroke="#e0e0e0" stroke-width="1.1" fill="none"/><circle cx="4.5" cy="3" r="1.3" fill="#e0e0e0"/></svg>
<svg style="left:227px;top:411.8px" width="6" height="7" viewBox="0 0 6 7"><rect x="0" y="3" width="6" height="4" fill="#d8d8d8"/><path d="M1.2 3 V1.8 A1.6 1.6 0 0 1 4.4 1.6" stroke="#d8d8d8" stroke-width="1" fill="none"/></svg>
<div class="t" style="transform:scaleX(0.926);transform-origin:0 50%;left:242.5px;top:410.3px;font-size:6.59px;color:#e0e0e0;-webkit-text-stroke:0.1px currentColor">A1</div>
<svg style="left:262px;top:411.8px" width="9" height="7" viewBox="0 0 9 7"><rect x="0.5" y="0.5" width="5.5" height="6" stroke="#cfcfcf" stroke-width="1" fill="none"/><path d="M6 1.5 L8.5 0.8 V6.2 L6 5.5" stroke="#cfcfcf" stroke-width="1" fill="none"/><path d="M0.5 3.5 H6" stroke="#cfcfcf" stroke-width="0.8"/></svg>
<div class="t" style="transform:scaleX(0.926);transform-origin:0 50%;left:281.5px;top:410.3px;font-size:7.56px;color:#a8a8a8">M</div>
<div class="t" style="transform:scaleX(0.926);transform-origin:0 50%;left:300px;top:410.3px;font-size:7.56px;color:#a8a8a8">S</div>
<svg style="left:318px;top:410.3px" width="6" height="10" viewBox="0 0 6 10"><rect x="1.5" y="0" width="3" height="6" rx="1.5" fill="#cfcfcf"/><path d="M0.5 4 Q0.5 7.5 3 7.5 Q5.5 7.5 5.5 4 M3 7.5 V9.5 M1.5 9.5 H4.5" stroke="#cfcfcf" stroke-width="0.8" fill="none"/></svg>
<svg style="left:227px;top:428.5px" width="6" height="7" viewBox="0 0 6 7"><rect x="0" y="3" width="6" height="4" fill="#d8d8d8"/><path d="M1.2 3 V1.8 A1.6 1.6 0 0 1 4.4 1.6" stroke="#d8d8d8" stroke-width="1" fill="none"/></svg>
<div class="t" style="transform:scaleX(0.926);transform-origin:0 50%;left:242.5px;top:427px;font-size:6.59px;color:#e0e0e0;-webkit-text-stroke:0.1px currentColor">A2</div>
<svg style="left:262px;top:428.5px" width="9" height="7" viewBox="0 0 9 7"><rect x="0.5" y="0.5" width="5.5" height="6" stroke="#cfcfcf" stroke-width="1" fill="none"/><path d="M6 1.5 L8.5 0.8 V6.2 L6 5.5" stroke="#cfcfcf" stroke-width="1" fill="none"/><path d="M0.5 3.5 H6" stroke="#cfcfcf" stroke-width="0.8"/></svg>
<div class="t" style="transform:scaleX(0.926);transform-origin:0 50%;left:281.5px;top:427px;font-size:7.56px;color:#a8a8a8">M</div>
<div class="t" style="transform:scaleX(0.926);transform-origin:0 50%;left:300px;top:427px;font-size:7.56px;color:#a8a8a8">S</div>
<svg style="left:318px;top:427px" width="6" height="10" viewBox="0 0 6 10"><rect x="1.5" y="0" width="3" height="6" rx="1.5" fill="#cfcfcf"/><path d="M0.5 4 Q0.5 7.5 3 7.5 Q5.5 7.5 5.5 4 M3 7.5 V9.5 M1.5 9.5 H4.5" stroke="#cfcfcf" stroke-width="0.8" fill="none"/></svg>
<svg style="left:227px;top:445.0px" width="6" height="7" viewBox="0 0 6 7"><rect x="0" y="3" width="6" height="4" fill="#d8d8d8"/><path d="M1.2 3 V1.8 A1.6 1.6 0 0 1 4.4 1.6" stroke="#d8d8d8" stroke-width="1" fill="none"/></svg>
<div class="t" style="transform:scaleX(0.926);transform-origin:0 50%;left:242.5px;top:443.5px;font-size:6.59px;color:#e0e0e0;-webkit-text-stroke:0.1px currentColor">A3</div>
<svg style="left:262px;top:445.0px" width="9" height="7" viewBox="0 0 9 7"><rect x="0.5" y="0.5" width="5.5" height="6" stroke="#cfcfcf" stroke-width="1" fill="none"/><path d="M6 1.5 L8.5 0.8 V6.2 L6 5.5" stroke="#cfcfcf" stroke-width="1" fill="none"/><path d="M0.5 3.5 H6" stroke="#cfcfcf" stroke-width="0.8"/></svg>
<div class="t" style="transform:scaleX(0.926);transform-origin:0 50%;left:281.5px;top:443.5px;font-size:7.56px;color:#a8a8a8">M</div>
<div class="t" style="transform:scaleX(0.926);transform-origin:0 50%;left:300px;top:443.5px;font-size:7.56px;color:#a8a8a8">S</div>
<svg style="left:318px;top:443.5px" width="6" height="10" viewBox="0 0 6 10"><rect x="1.5" y="0" width="3" height="6" rx="1.5" fill="#cfcfcf"/><path d="M0.5 4 Q0.5 7.5 3 7.5 Q5.5 7.5 5.5 4 M3 7.5 V9.5 M1.5 9.5 H4.5" stroke="#cfcfcf" stroke-width="0.8" fill="none"/></svg>
<div class="t" style="transform:scaleX(0.926);transform-origin:0 50%;left:208px;top:391px;font-size:6.59px;color:#e0e0e0;-webkit-text-stroke:0.1px currentColor">V1</div>
<div class="t" style="transform:scaleX(0.926);transform-origin:0 50%;left:208px;top:410.3px;font-size:6.59px;color:#e0e0e0;-webkit-text-stroke:0.1px currentColor">A1</div>
<svg style="left:227px;top:461.5px" width="6" height="7" viewBox="0 0 6 7"><rect x="0" y="3" width="6" height="4" fill="#d8d8d8"/><path d="M1.2 3 V1.8 A1.6 1.6 0 0 1 4.4 1.6" stroke="#d8d8d8" stroke-width="1" fill="none"/></svg>
<div class="t" style="transform:scaleX(0.926);transform-origin:0 50%;left:238px;top:460px;font-size:7.88px;color:#bdbdbd">Mix</div>
<div class="t" style="transform:scaleX(0.926);transform-origin:0 50%;left:290px;top:460.5px;font-size:7.56px;color:#3d8fe3">0.0</div>
<svg style="left:337px;top:461px" width="9" height="8" viewBox="0 0 9 8"><path d="M0.5 0.5 L4.5 4 L0.5 7.5 Z M8.5 0.5 L4.5 4 L8.5 7.5 Z" fill="#d8d8d8"/><path d="M4.5 0 V8" stroke="#d8d8d8" stroke-width="1"/></svg>

<div class="t" style="transform:scaleX(0.926);transform-origin:0 50%;left:352.4px;top:325px;font-size:7.88px;color:#c8c8c8">:00:00</div>
<div class="t" style="transform:scaleX(0.926);transform-origin:0 50%;left:382.4px;top:325px;font-size:7.88px;color:#c8c8c8">00:00:15:00</div>
<div class="t" style="transform:scaleX(0.926);transform-origin:0 50%;left:432.4px;top:325px;font-size:7.88px;color:#c8c8c8">00:00:30:00</div>
<div class="t" style="transform:scaleX(0.926);transform-origin:0 50%;left:482.2px;top:325px;font-size:7.88px;color:#c8c8c8">00:00:45:00</div>
<div class="t" style="transform:scaleX(0.926);transform-origin:0 50%;left:532px;top:325px;font-size:7.88px;color:#c8c8c8">00:01:00:00</div>
<div class="t" style="transform:scaleX(0.926);transform-origin:0 50%;left:581.8px;top:325px;font-size:7.88px;color:#c8c8c8">00:01:15:00</div>
<svg style="left:0;top:0" width="850" height="499" viewBox="0 0 850 499"><g fill="#5e5e5e"><rect x="352.0" y="336" width="0.8" height="5"/><rect x="355.1" y="339" width="0.8" height="2"/><rect x="358.2" y="339" width="0.8" height="2"/><rect x="361.3" y="339" width="0.8" height="2"/><rect x="364.4" y="338" width="0.8" height="3"/><rect x="367.6" y="339" width="0.8" height="2"/><rect x="370.7" y="339" width="0.8" height="2"/><rect x="373.8" y="339" width="0.8" height="2"/><rect x="376.9" y="338" width="0.8" height="3"/><rect x="380.0" y="339" width="0.8" height="2"/><rect x="383.1" y="339" width="0.8" height="2"/><rect x="386.2" y="339" width="0.8" height="2"/><rect x="389.4" y="338" width="0.8" height="3"/><rect x="392.5" y="339" width="0.8" height="2"/><rect x="395.6" y="339" width="0.8" height="2"/><rect x="398.7" y="339" width="0.8" height="2"/><rect x="401.8" y="336" width="0.8" height="5"/><rect x="404.9" y="339" width="0.8" height="2"/><rect x="408.0" y="339" width="0.8" height="2"/><rect x="411.1" y="339" width="0.8" height="2"/><rect x="414.2" y="338" width="0.8" height="3"/><rect x="417.4" y="339" width="0.8" height="2"/><rect x="420.5" y="339" width="0.8" height="2"/><rect x="423.6" y="339" width="0.8" height="2"/><rect x="426.7" y="338" width="0.8" height="3"/><rect x="429.8" y="339" width="0.8" height="2"/><rect x="432.9" y="339" width="0.8" height="2"/><rect x="436.0" y="339" width="0.8" height="2"/><rect x="439.1" y="338" width="0.8" height="3"/><rect x="442.3" y="339" width="0.8" height="2"/><rect x="445.4" y="339" width="0.8" height="2"/><rect x="448.5" y="339" width="0.8" height="2"/><rect x="451.6" y="336" width="0.8" height="5"/><rect x="454.7" y="339" width="0.8" height="2"/><rect x="457.8" y="339" width="0.8" height="2"/><rect x="460.9" y="339" width="0.8" height="2"/><rect x="464.1" y="338" width="0.8" height="3"/><rect x="467.2" y="339" width="0.8" height="2"/><rect x="470.3" y="339" width="0.8" height="2"/><rect x="473.4" y="339" width="0.8" height="2"/><rect x="476.5" y="338" width="0.8" height="3"/><rect x="479.6" y="339" width="0.8" height="2"/><rect x="482.7" y="339" width="0.8" height="2"/><rect x="485.8" y="339" width="0.8" height="2"/><rect x="488.9" y="338" width="0.8" height="3"/><rect x="492.1" y="339" width="0.8" height="2"/><rect x="495.2" y="339" width="0.8" height="2"/><rect x="498.3" y="339" width="0.8" height="2"/><rect x="501.4" y="336" width="0.8" height="5"/><rect x="504.5" y="339" width="0.8" height="2"/><rect x="507.6" y="339" width="0.8" height="2"/><rect x="510.7" y="339" width="0.8" height="2"/><rect x="513.9" y="338" width="0.8" height="3"/><rect x="517.0" y="339" width="0.8" height="2"/><rect x="520.1" y="339" width="0.8" height="2"/><rect x="523.2" y="339" width="0.8" height="2"/><rect x="526.3" y="338" width="0.8" height="3"/><rect x="529.4" y="339" width="0.8" height="2"/><rect x="532.5" y="339" width="0.8" height="2"/><rect x="535.6" y="339" width="0.8" height="2"/><rect x="538.8" y="338" width="0.8" height="3"/><rect x="541.9" y="339" width="0.8" height="2"/><rect x="545.0" y="339" width="0.8" height="2"/><rect x="548.1" y="339" width="0.8" height="2"/><rect x="551.2" y="336" width="0.8" height="5"/><rect x="554.3" y="339" width="0.8" height="2"/><rect x="557.4" y="339" width="0.8" height="2"/><rect x="560.5" y="339" width="0.8" height="2"/><rect x="563.6" y="338" width="0.8" height="3"/><rect x="566.8" y="339" width="0.8" height="2"/><rect x="569.9" y="339" width="0.8" height="2"/><rect x="573.0" y="339" width="0.8" height="2"/><rect x="576.1" y="338" width="0.8" height="3"/><rect x="579.2" y="339" width="0.8" height="2"/><rect x="582.3" y="339" width="0.8" height="2"/><rect x="585.4" y="339" width="0.8" height="2"/><rect x="588.5" y="338" width="0.8" height="3"/><rect x="591.7" y="339" width="0.8" height="2"/><rect x="594.8" y="339" width="0.8" height="2"/><rect x="597.9" y="339" width="0.8" height="2"/><rect x="601.0" y="336" width="0.8" height="5"/><rect x="604.1" y="339" width="0.8" height="2"/><rect x="607.2" y="339" width="0.8" height="2"/><rect x="610.3" y="339" width="0.8" height="2"/><rect x="613.5" y="338" width="0.8" height="3"/><rect x="616.6" y="339" width="0.8" height="2"/><rect x="619.7" y="339" width="0.8" height="2"/></g></svg>
<div class="a" style="left:352px;top:342px;width:270px;height:2px;background:#e3d22c"></div>
<div class="a" style="left:351.5px;top:388px;width:270.5px;height:16px;background:#7fa3d6"></div>
<svg style="left:357.5px;top:391px" width="7" height="6" viewBox="0 0 7 6"><rect x="0" y="0" width="7" height="6" fill="#4a4a4a"/><path d="M1 5 L6 1" stroke="#aaa" stroke-width="0.8"/></svg>
<div class="t" style="transform:scaleX(0.926);transform-origin:0 50%;left:370px;top:389.5px;font-size:6.8px;color:#1c2433">VideoExample.mp4 [V]</div>
<div class="a" style="left:351.5px;top:407.5px;width:270.5px;height:16.3px;background:#7fa3d6"></div>
<svg style="left:0;top:0" width="850" height="499" viewBox="0 0 850 499"><rect x="351.5" y="409.3" width="270.5" height="5.8" fill="#a8c8f0"/><rect x="351.5" y="416.3" width="270.5" height="5.8" fill="#a8c8f0"/><g fill="#3a5d95"><rect x="357.4" y="409.7" width="1" height="5"/><rect x="359.1" y="409.9" width="0.8" height="4.5"/><rect x="360.4" y="410.7" width="2" height="3"/><rect x="363.6" y="409.7" width="1.5" height="5"/><rect x="365.6" y="410.7" width="2" height="3"/><rect x="368.3" y="409.7" width="1" height="5"/><rect x="370.5" y="409.9" width="1.2" height="4.5"/><rect x="372.4" y="410.4" width="2" height="3.5"/><rect x="375.6" y="410.7" width="0.8" height="3"/><rect x="379.3" y="410.2" width="1.2" height="4"/><rect x="381.4" y="410.7" width="0.8" height="3"/><rect x="382.7" y="410.7" width="1.5" height="3"/><rect x="385.4" y="410.7" width="0.8" height="3"/><rect x="390.9" y="410.7" width="1.5" height="3"/><rect x="393.1" y="410.2" width="1.2" height="4"/><rect x="395.2" y="409.9" width="0.8" height="4.5"/><rect x="396.5" y="410.4" width="1" height="3.5"/><rect x="398.0" y="409.9" width="0.8" height="4.5"/><rect x="399.5" y="410.4" width="2" height="3.5"/><rect x="402.2" y="409.9" width="1" height="4.5"/><rect x="405.7" y="409.7" width="1.2" height="5"/><rect x="407.4" y="410.4" width="1" height="3.5"/><rect x="408.9" y="410.4" width="0.8" height="3.5"/><rect x="410.6" y="409.7" width="0.8" height="5"/><rect x="412.3" y="410.7" width="1.5" height="3"/><rect x="414.5" y="410.4" width="2" height="3.5"/><rect x="417.4" y="409.7" width="1.2" height="5"/><rect x="424.2" y="410.4" width="1" height="3.5"/><rect x="425.9" y="409.9" width="1.5" height="4.5"/><rect x="428.6" y="410.7" width="0.8" height="3"/><rect x="430.3" y="409.9" width="1" height="4.5"/><rect x="432.5" y="409.7" width="1.2" height="5"/><rect x="434.2" y="410.4" width="1" height="3.5"/><rect x="437.6" y="410.7" width="0.8" height="3"/><rect x="439.6" y="410.7" width="1" height="3"/><rect x="441.5" y="409.7" width="1.2" height="5"/><rect x="443.4" y="410.2" width="0.8" height="4"/><rect x="445.4" y="409.7" width="1.2" height="5"/><rect x="452.2" y="410.7" width="2" height="3"/><rect x="456.8" y="409.7" width="1.5" height="5"/><rect x="458.8" y="410.2" width="1" height="4"/><rect x="462.3" y="409.7" width="1.5" height="5"/><rect x="465.0" y="409.7" width="1.5" height="5"/><rect x="467.0" y="410.7" width="0.8" height="3"/><rect x="468.7" y="410.2" width="1.5" height="4"/><rect x="471.4" y="409.9" width="1.5" height="4.5"/><rect x="473.4" y="409.7" width="2" height="5"/><rect x="475.9" y="410.7" width="1.5" height="3"/><rect x="477.9" y="409.7" width="1.5" height="5"/><rect x="480.6" y="410.7" width="1.2" height="3"/><rect x="482.5" y="410.4" width="2" height="3.5"/><rect x="487.8" y="410.2" width="1.5" height="4"/><rect x="490.5" y="410.4" width="1" height="3.5"/><rect x="492.4" y="410.4" width="1" height="3.5"/><rect x="496.0" y="410.7" width="1" height="3"/><rect x="497.9" y="409.9" width="1" height="4.5"/><rect x="500.1" y="409.7" width="1.2" height="5"/><rect x="503.1" y="409.7" width="1.2" height="5"/><rect x="504.8" y="409.9" width="1" height="4.5"/><rect x="506.3" y="410.4" width="1.2" height="3.5"/><rect x="508.0" y="409.9" width="0.8" height="4.5"/><rect x="509.7" y="410.4" width="0.8" height="3.5"/><rect x="511.7" y="410.4" width="1.2" height="3.5"/><rect x="514.1" y="410.7" width="2" height="3"/><rect x="517.0" y="409.7" width="1.2" height="5"/><rect x="518.9" y="410.4" width="1.5" height="3.5"/><rect x="521.6" y="409.9" width="1" height="4.5"/><rect x="523.1" y="409.7" width="1.5" height="5"/><rect x="525.5" y="410.2" width="1.5" height="4"/><rect x="527.7" y="410.7" width="0.8" height="3"/><rect x="529.7" y="410.2" width="0.8" height="4"/><rect x="531.4" y="410.7" width="1.2" height="3"/><rect x="533.1" y="409.9" width="0.8" height="4.5"/><rect x="537.0" y="409.9" width="0.8" height="4.5"/><rect x="538.5" y="410.2" width="2" height="4"/><rect x="545.9" y="409.9" width="1" height="4.5"/><rect x="547.8" y="410.4" width="2" height="3.5"/><rect x="554.7" y="409.9" width="2" height="4.5"/><rect x="557.2" y="410.7" width="2" height="3"/><rect x="559.7" y="410.7" width="2" height="3"/><rect x="562.9" y="409.7" width="2" height="5"/><rect x="567.6" y="409.9" width="1.5" height="4.5"/><rect x="570.3" y="410.4" width="1.5" height="3.5"/><rect x="573.0" y="410.2" width="2" height="4"/><rect x="578.9" y="410.7" width="0.8" height="3"/><rect x="580.4" y="410.2" width="0.8" height="4"/><rect x="582.1" y="409.7" width="1" height="5"/><rect x="588.7" y="409.9" width="1.5" height="4.5"/><rect x="602.6" y="410.4" width="1" height="3.5"/><rect x="604.5" y="410.7" width="1.5" height="3"/><rect x="607.2" y="410.4" width="2" height="3.5"/><rect x="609.7" y="410.4" width="0.8" height="3.5"/><rect x="611.4" y="410.7" width="1.2" height="3"/><rect x="613.5" y="410.4" width="2" height="3.5"/><rect x="616.7" y="410.7" width="0.8" height="3"/><rect x="618.7" y="410.4" width="1" height="3.5"/><rect x="357.4" y="416.7" width="1" height="5"/><rect x="359.1" y="416.9" width="0.8" height="4.5"/><rect x="360.4" y="417.7" width="2" height="3"/><rect x="363.6" y="416.7" width="1.5" height="5"/><rect x="365.6" y="417.7" width="2" height="3"/><rect x="368.3" y="416.7" width="1" height="5"/><rect x="370.5" y="416.9" width="1.2" height="4.5"/><rect x="372.4" y="417.4" width="2" height="3.5"/><rect x="375.6" y="417.7" width="0.8" height="3"/><rect x="379.3" y="417.2" width="1.2" height="4"/><rect x="381.4" y="417.7" width="0.8" height="3"/><rect x="382.7" y="417.7" width="1.5" height="3"/><rect x="385.4" y="417.7" width="0.8" height="3"/><rect x="390.9" y="417.7" width="1.5" height="3"/><rect x="393.1" y="417.2" width="1.2" height="4"/><rect x="395.2" y="416.9" width="0.8" height="4.5"/><rect x="396.5" y="417.4" width="1" height="3.5"/><rect x="398.0" y="416.9" width="0.8" height="4.5"/><rect x="399.5" y="417.4" width="2" height="3.5"/><rect x="402.2" y="416.9" width="1" height="4.5"/><rect x="405.7" y="416.7" width="1.2" height="5"/><rect x="407.4" y="417.4" width="1" height="3.5"/><rect x="408.9" y="417.4" width="0.8" height="3.5"/><rect x="410.6" y="416.7" width="0.8" height="5"/><rect x="412.3" y="417.7" width="1.5" height="3"/><rect x="414.5" y="417.4" width="2" height="3.5"/><rect x="417.4" y="416.7" width="1.2" height="5"/><rect x="424.2" y="417.4" width="1" height="3.5"/><rect x="425.9" y="416.9" width="1.5" height="4.5"/><rect x="428.6" y="417.7" width="0.8" height="3"/><rect x="430.3" y="416.9" width="1" height="4.5"/><rect x="432.5" y="416.7" width="1.2" height="5"/><rect x="434.2" y="417.4" width="1" height="3.5"/><rect x="437.6" y="417.7" width="0.8" height="3"/><rect x="439.6" y="417.7" width="1" height="3"/><rect x="441.5" y="416.7" width="1.2" height="5"/><rect x="443.4" y="417.2" width="0.8" height="4"/><rect x="445.4" y="416.7" width="1.2" height="5"/><rect x="452.2" y="417.7" width="2" height="3"/><rect x="456.8" y="416.7" width="1.5" height="5"/><rect x="458.8" y="417.2" width="1" height="4"/><rect x="462.3" y="416.7" width="1.5" height="5"/><rect x="465.0" y="416.7" width="1.5" height="5"/><rect x="467.0" y="417.7" width="0.8" height="3"/><rect x="468.7" y="417.2" width="1.5" height="4"/><rect x="471.4" y="416.9" width="1.5" height="4.5"/><rect x="473.4" y="416.7" width="2" height="5"/><rect x="475.9" y="417.7" width="1.5" height="3"/><rect x="477.9" y="416.7" width="1.5" height="5"/><rect x="480.6" y="417.7" width="1.2" height="3"/><rect x="482.5" y="417.4" width="2" height="3.5"/><rect x="487.8" y="417.2" width="1.5" height="4"/><rect x="490.5" y="417.4" width="1" height="3.5"/><rect x="492.4" y="417.4" width="1" height="3.5"/><rect x="496.0" y="417.7" width="1" height="3"/><rect x="497.9" y="416.9" width="1" height="4.5"/><rect x="500.1" y="416.7" width="1.2" height="5"/><rect x="503.1" y="416.7" width="1.2" height="5"/><rect x="504.8" y="416.9" width="1" height="4.5"/><rect x="506.3" y="417.4" width="1.2" height="3.5"/><rect x="508.0" y="416.9" width="0.8" height="4.5"/><rect x="509.7" y="417.4" width="0.8" height="3.5"/><rect x="511.7" y="417.4" width="1.2" height="3.5"/><rect x="514.1" y="417.7" width="2" height="3"/><rect x="517.0" y="416.7" width="1.2" height="5"/><rect x="518.9" y="417.4" width="1.5" height="3.5"/><rect x="521.6" y="416.9" width="1" height="4.5"/><rect x="523.1" y="416.7" width="1.5" height="5"/><rect x="525.5" y="417.2" width="1.5" height="4"/><rect x="527.7" y="417.7" width="0.8" height="3"/><rect x="529.7" y="417.2" width="0.8" height="4"/><rect x="531.4" y="417.7" width="1.2" height="3"/><rect x="533.1" y="416.9" width="0.8" height="4.5"/><rect x="537.0" y="416.9" width="0.8" height="4.5"/><rect x="538.5" y="417.2" width="2" height="4"/><rect x="545.9" y="416.9" width="1" height="4.5"/><rect x="547.8" y="417.4" width="2" height="3.5"/><rect x="554.7" y="416.9" width="2" height="4.5"/><rect x="557.2" y="417.7" width="2" height="3"/><rect x="559.7" y="417.7" width="2" height="3"/><rect x="562.9" y="416.7" width="2" height="5"/><rect x="567.6" y="416.9" width="1.5" height="4.5"/><rect x="570.3" y="417.4" width="1.5" height="3.5"/><rect x="573.0" y="417.2" width="2" height="4"/><rect x="578.9" y="417.7" width="0.8" height="3"/><rect x="580.4" y="417.2" width="0.8" height="4"/><rect x="582.1" y="416.7" width="1" height="5"/><rect x="588.7" y="416.9" width="1.5" height="4.5"/><rect x="602.6" y="417.4" width="1" height="3.5"/><rect x="604.5" y="417.7" width="1.5" height="3"/><rect x="607.2" y="417.4" width="2" height="3.5"/><rect x="609.7" y="417.4" width="0.8" height="3.5"/><rect x="611.4" y="417.7" width="1.2" height="3"/><rect x="613.5" y="417.4" width="2" height="3.5"/><rect x="616.7" y="417.7" width="0.8" height="3"/><rect x="618.7" y="417.4" width="1" height="3.5"/></g></svg>
<svg style="left:357.5px;top:409.5px" width="7" height="6" viewBox="0 0 7 6"><rect x="0" y="0" width="7" height="6" fill="#4a4a4a"/><path d="M1 5 L6 1" stroke="#aaa" stroke-width="0.8"/></svg>
<svg style="left:350px;top:333px" width="6" height="9" viewBox="0 0 6 9"><path d="M0.3 0.5 H5 V6 L2.6 8.5 L0.3 6 Z" fill="#3d8fe3"/></svg>
<div class="a" style="left:350.3px;top:341px;width:1.5px;height:126px;background:#3f86d6"></div>
<div class="a" style="left:621.5px;top:346px;width:7px;height:57.5px;background:#2e2e2e;border-radius:3.5px"></div>
<div class="a" style="left:621.5px;top:408px;width:7px;height:59px;background:#2e2e2e;border-radius:3.5px"></div>
<svg style="left:621.5px;top:346.0px" width="7" height="7" viewBox="0 0 7 7"><circle cx="3.5" cy="3.5" r="2.6" stroke="#b8b8b8" stroke-width="1.2" fill="#2e2e2e"/></svg>
<svg style="left:621.5px;top:396.5px" width="7" height="7" viewBox="0 0 7 7"><circle cx="3.5" cy="3.5" r="2.6" stroke="#b8b8b8" stroke-width="1.2" fill="#2e2e2e"/></svg>
<svg style="left:621.5px;top:407.8px" width="7" height="7" viewBox="0 0 7 7"><circle cx="3.5" cy="3.5" r="2.6" stroke="#b8b8b8" stroke-width="1.2" fill="#2e2e2e"/></svg>
<svg style="left:621.5px;top:460.0px" width="7" height="7" viewBox="0 0 7 7"><circle cx="3.5" cy="3.5" r="2.6" stroke="#b8b8b8" stroke-width="1.2" fill="#2e2e2e"/></svg>
<div class="a" style="left:376px;top:469.5px;width:246px;height:5px;background:#1c1c1c"></div>
<div class="a" style="left:206px;top:468.5px;width:170px;height:7px;background:#2e2e2e;border-radius:3.5px"></div>
<svg style="left:202.5px;top:468.5px" width="7" height="7" viewBox="0 0 7 7"><circle cx="3.5" cy="3.5" r="2.6" stroke="#b8b8b8" stroke-width="1.2" fill="#2e2e2e"/></svg>
<svg style="left:372.5px;top:468.5px" width="7" height="7" viewBox="0 0 7 7"><circle cx="3.5" cy="3.5" r="2.6" stroke="#b8b8b8" stroke-width="1.2" fill="#2e2e2e"/></svg>
<!-- AUDIO METERS -->
<div class="p" style="left:640px;top:296px;width:66px;height:187.5px"></div>
<div class="a" style="left:649px;top:312px;width:34px;height:149px;background:#1b1b1b;border:1px solid #121212"></div>
<div class="a" style="left:649px;top:319px;width:34px;height:1px;background:#121212"></div>
<div class="a" style="left:665.5px;top:312px;width:1px;height:7px;background:#121212"></div>
<div class="a" style="left:649.5px;top:459.5px;width:33px;height:2px;background:#a8b63a"></div>
<div class="t" style="transform:scaleX(0.926);transform-origin:0 50%;left:686.5px;top:315.2px;font-size:6.8px;color:#b0b0b0">0</div>
<div class="t" style="transform:scaleX(0.926);transform-origin:0 50%;left:686.5px;top:329.1px;font-size:6.8px;color:#b0b0b0">-6</div>
<div class="t" style="transform:scaleX(0.926);transform-origin:0 50%;left:686.5px;top:343.1px;font-size:6.8px;color:#b0b0b0">-12</div>
<div class="t" style="transform:scaleX(0.926);transform-origin:0 50%;left:686.5px;top:357.0px;font-size:6.8px;color:#b0b0b0">-18</div>
<div class="t" style="transform:scaleX(0.926);transform-origin:0 50%;left:686.5px;top:370.9px;font-size:6.8px;color:#b0b0b0">-24</div>
<div class="t" style="transform:scaleX(0.926);transform-origin:0 50%;left:686.5px;top:384.9px;font-size:6.8px;color:#b0b0b0">-30</div>
<div class="t" style="transform:scaleX(0.926);transform-origin:0 50%;left:686.5px;top:398.8px;font-size:6.8px;color:#b0b0b0">-36</div>
<div class="t" style="transform:scaleX(0.926);transform-origin:0 50%;left:686.5px;top:412.7px;font-size:6.8px;color:#b0b0b0">-42</div>
<div class="t" style="transform:scaleX(0.926);transform-origin:0 50%;left:686.5px;top:426.6px;font-size:6.8px;color:#b0b0b0">-48</div>
<div class="t" style="transform:scaleX(0.926);transform-origin:0 50%;left:686.5px;top:440.6px;font-size:6.8px;color:#b0b0b0">-54</div>
<div class="t" style="transform:scaleX(0.926);transform-origin:0 50%;left:686.5px;top:454.5px;font-size:6.8px;color:#b0b0b0">dB</div>
<svg style="left:0;top:0" width="850" height="499" viewBox="0 0 850 499"><g fill="#777"><rect x="683" y="320.2" width="2.5" height="0.8"/><rect x="683" y="322.5" width="1.5" height="0.8"/><rect x="683" y="324.8" width="1.5" height="0.8"/><rect x="683" y="327.2" width="1.5" height="0.8"/><rect x="683" y="329.5" width="1.5" height="0.8"/><rect x="683" y="331.8" width="1.5" height="0.8"/><rect x="683" y="334.1" width="2.5" height="0.8"/><rect x="683" y="336.5" width="1.5" height="0.8"/><rect x="683" y="338.8" width="1.5" height="0.8"/><rect x="683" y="341.1" width="1.5" height="0.8"/><rect x="683" y="343.4" width="1.5" height="0.8"/><rect x="683" y="345.7" width="1.5" height="0.8"/><rect x="683" y="348.1" width="2.5" height="0.8"/><rect x="683" y="350.4" width="1.5" height="0.8"/><rect x="683" y="352.7" width="1.5" height="0.8"/><rect x="683" y="355.0" width="1.5" height="0.8"/><rect x="683" y="357.3" width="1.5" height="0.8"/><rect x="683" y="359.7" width="1.5" height="0.8"/><rect x="683" y="362.0" width="2.5" height="0.8"/><rect x="683" y="364.3" width="1.5" height="0.8"/><rect x="683" y="366.6" width="1.5" height="0.8"/><rect x="683" y="369.0" width="1.5" height="0.8"/><rect x="683" y="371.3" width="1.5" height="0.8"/><rect x="683" y="373.6" width="1.5" height="0.8"/><rect x="683" y="375.9" width="2.5" height="0.8"/><rect x="683" y="378.2" width="1.5" height="0.8"/><rect x="683" y="380.6" width="1.5" height="0.8"/><rect x="683" y="382.9" width="1.5" height="0.8"/><rect x="683" y="385.2" width="1.5" height="0.8"/><rect x="683" y="387.5" width="1.5" height="0.8"/><rect x="683" y="389.8" width="2.5" height="0.8"/><rect x="683" y="392.2" width="1.5" height="0.8"/><rect x="683" y="394.5" width="1.5" height="0.8"/><rect x="683" y="396.8" width="1.5" height="0.8"/><rect x="683" y="399.1" width="1.5" height="0.8"/><rect x="683" y="401.5" width="1.5" height="0.8"/><rect x="683" y="403.8" width="2.5" height="0.8"/><rect x="683" y="406.1" width="1.5" height="0.8"/><rect x="683" y="408.4" width="1.5" height="0.8"/><rect x="683" y="410.7" width="1.5" height="0.8"/><rect x="683" y="413.1" width="1.5" height="0.8"/><rect x="683" y="415.4" width="1.5" height="0.8"/><rect x="683" y="417.7" width="2.5" height="0.8"/><rect x="683" y="420.0" width="1.5" height="0.8"/><rect x="683" y="422.4" width="1.5" height="0.8"/><rect x="683" y="424.7" width="1.5" height="0.8"/><rect x="683" y="427.0" width="1.5" height="0.8"/><rect x="683" y="429.3" width="1.5" height="0.8"/><rect x="683" y="431.6" width="2.5" height="0.8"/><rect x="683" y="434.0" width="1.5" height="0.8"/><rect x="683" y="436.3" width="1.5" height="0.8"/><rect x="683" y="438.6" width="1.5" height="0.8"/><rect x="683" y="440.9" width="1.5" height="0.8"/><rect x="683" y="443.2" width="1.5" height="0.8"/><rect x="683" y="445.6" width="2.5" height="0.8"/><rect x="683" y="447.9" width="1.5" height="0.8"/><rect x="683" y="450.2" width="1.5" height="0.8"/><rect x="683" y="452.5" width="1.5" height="0.8"/><rect x="683" y="454.9" width="1.5" height="0.8"/><rect x="683" y="457.2" width="1.5" height="0.8"/><rect x="683" y="459.5" width="2.5" height="0.8"/></g></svg>
<div class="a" style="left:652px;top:464.5px;width:10.5px;height:11.5px;background:#1b1b1b"></div>
<div class="t" style="transform:scaleX(0.926);transform-origin:0 50%;left:654.8px;top:465px;font-size:7.56px;color:#a8a8a8">S</div>
<div class="a" style="left:668px;top:464.5px;width:10.5px;height:11.5px;background:#1b1b1b"></div>
<div class="t" style="transform:scaleX(0.926);transform-origin:0 50%;left:670.8px;top:465px;font-size:7.56px;color:#a8a8a8">S</div>
<!-- STATUS BAR -->
<div class="p" style="left:0;top:485.5px;width:850px;height:13.5px;background:#262626"></div>
<svg style="left:1.5px;top:487px" width="11" height="10" viewBox="0 0 11 10"><ellipse cx="5.5" cy="5" rx="4.6" ry="4.3" stroke="#bdbdbd" stroke-width="1.2" fill="none"/><path d="M2.5 5.5 Q3.5 3 5.5 5 Q7.5 7 8.5 4.5" stroke="#bdbdbd" stroke-width="1.1" fill="none"/></svg>

</body></html>
